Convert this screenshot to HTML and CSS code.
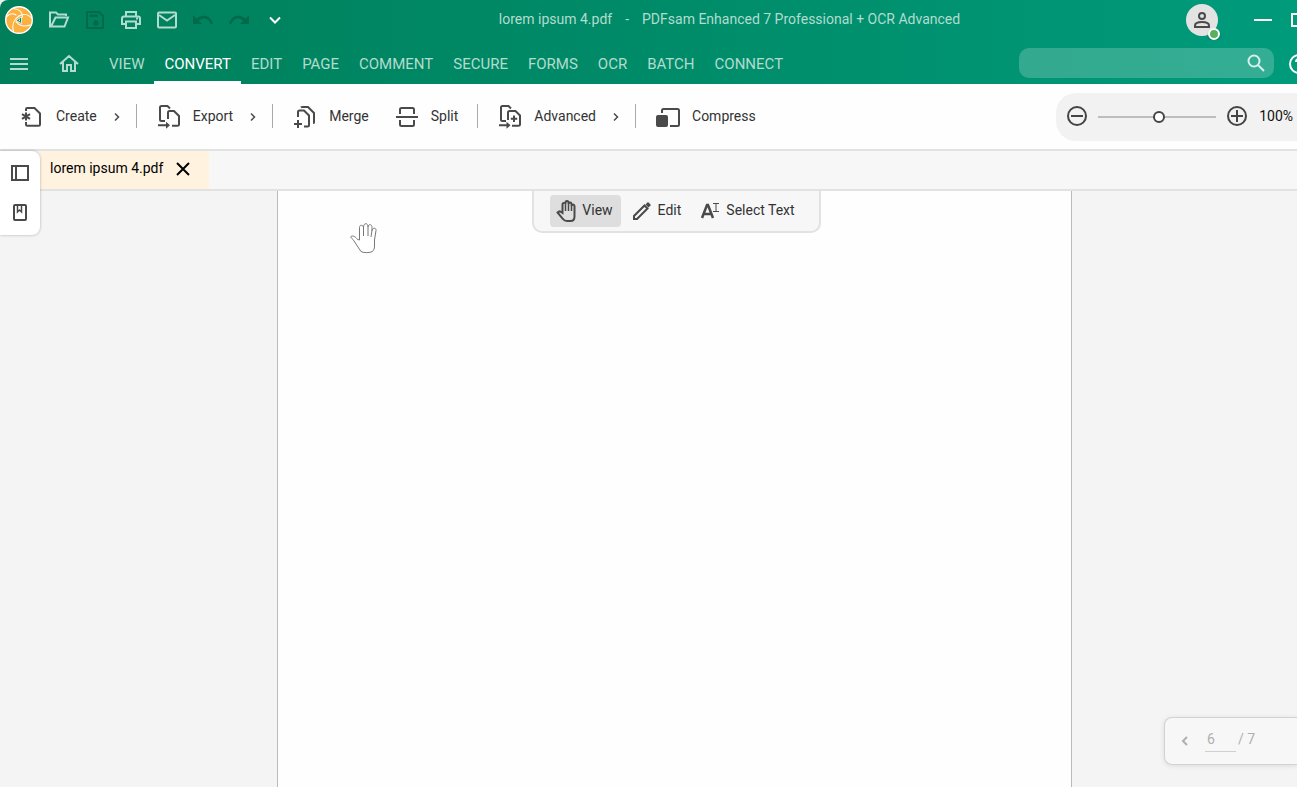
FILE: index.html
```html
<!DOCTYPE html>
<html lang="en">
<head>
<meta charset="utf-8">
<title>lorem ipsum 4.pdf - PDFsam Enhanced 7 Professional + OCR Advanced</title>
<link rel="stylesheet" href="styles.css">
</head>
<body>
<div class="app">
  <header class="header">
    <div class="titlebar">
      <svg class="logo" viewBox="0 0 28 28" aria-hidden="true">
        <circle cx="14" cy="14" r="13.3" fill="#fbb040" stroke="#fff" stroke-width="1.4"/>
        <g fill="none" stroke="#fff" stroke-width="1.1" stroke-linecap="round">
          <path d="M8 2.500C14 3 17.500 6 17.500 11"/>
          <path d="M26.500 12C23 8 18 7.500 14 10"/>
          <path d="M8.500 26C6.500 19 9 13 14 10"/>
          <path d="M11 15.500C14 20 20 21 25 19"/>
          <path d="M1.500 11C4 7.500 8 7 11 9"/>
        </g>
        <path d="M11 14.500L16.500 11V17.500Z" fill="#00845f" stroke="#fff" stroke-width=".8"/>
        <path d="M13.500 14.300L15 13.300V15.500Z" fill="#fff"/>
      </svg>
      <div class="quick">
        <button class="quick-btn" aria-label="Open"><svg width="22" height="22" viewBox="0 0 22 22" class="line"><path d="M18 7V5.500H10L8 3.500H2V17.500H16.500L20 8.500H7.500L3 17.500"/></svg></button>
        <button class="quick-btn off" aria-label="Save"><svg width="22" height="22" viewBox="0 0 22 22" class="line"><path d="M3 3H15L19 7V19H3Z" stroke-linejoin="round"/><path d="M5.500 5.500H14V8H5.500Z" fill="currentColor" stroke="none"/><circle cx="12" cy="14" r="2.700" fill="currentColor" stroke="none"/></svg></button>
        <button class="quick-btn" aria-label="Print"><svg width="22" height="22" viewBox="0 0 22 22" class="line"><path d="M6 7V3H16V7M6 15H2V9.500Q2 7.500 4 7.500H18Q20 7.500 20 9.500V15H16M6 12.500H16V19H6Z"/><path d="M16 9.500h2"/></svg></button>
        <button class="quick-btn" aria-label="Email"><svg width="22" height="22" viewBox="0 0 22 22" class="line"><rect x="2" y="3.500" width="18" height="15" rx="1"/><path d="M3 6L11 11.500 19 6"/></svg></button>
        <button class="quick-btn off" aria-label="Undo"><svg width="22" height="22" viewBox="0 0 22 22"><path fill="currentColor" d="M1 6V15H10L6.700 11.700C12 7.500 17 10 18.800 15.500L21 14.500C18.500 6.500 10.500 4.500 4.700 9.700Z"/></svg></button>
        <button class="quick-btn off" aria-label="Redo"><svg width="22" height="22" viewBox="0 0 22 22"><path fill="currentColor" d="M21 6V15H12L15.300 11.700C10 7.500 5 10 3.200 15.500L1 14.500C3.500 6.500 11.500 4.500 17.300 9.700Z"/></svg></button>
        <button class="quick-btn bright" aria-label="Customize toolbar"><svg width="22" height="22" viewBox="0 0 22 22" class="line"><path d="M6 8.500L11 13.500 16 8.500"/></svg></button>
      </div>
      <h1 class="title"><span>lorem ipsum 4.pdf</span><span>-</span><span>PDFsam Enhanced 7 Professional + OCR Advanced</span></h1>
      <div class="window">
        <button class="account" aria-label="Account">
          <svg width="18" height="18" viewBox="0 0 18 18" fill="none" stroke="#4a4a4a" stroke-width="2"><circle cx="9" cy="5" r="3"/><path d="M2 16V14.500C2 12 6 11 9 11S16 12 16 14.500V16Z"/></svg>
          <span class="status"></span>
        </button>
        <button class="win-btn" aria-label="Minimize"><svg width="18" height="14" viewBox="0 0 18 14"><path d="M0 7H18" stroke="#fff" stroke-width="2"/></svg></button>
        <button class="win-btn" aria-label="Maximize"><svg width="14" height="14" viewBox="0 0 14 14"><rect x="1" y="1" width="12" height="12" fill="none" stroke="#fff" stroke-width="2"/></svg></button>
      </div>
    </div>
    <div class="menubar">
      <button class="menu-icon" aria-label="Menu"><svg width="18" height="14" viewBox="0 0 18 14" class="line"><path d="M0 2H18M0 7H18M0 12H18"/></svg></button>
      <button class="menu-icon home" aria-label="Home"><svg width="22" height="20" viewBox="0 0 22 20" class="line"><path d="M2 11L11 3 20 11M5 9V18H9V12H13V18H17V9"/></svg></button>
      <nav class="tabs">
        <a href="#view">VIEW</a>
        <a href="#convert" class="active" aria-current="page">CONVERT</a>
        <a href="#edit">EDIT</a>
        <a href="#page">PAGE</a>
        <a href="#comment">COMMENT</a>
        <a href="#secure">SECURE</a>
        <a href="#forms">FORMS</a>
        <a href="#ocr">OCR</a>
        <a href="#batch">BATCH</a>
        <a href="#connect">CONNECT</a>
      </nav>
      <div class="search">
        <input type="search" aria-label="Search">
        <button aria-label="Find"><svg width="18" height="18" viewBox="0 0 18 18" fill="none" stroke="#d9efe9" stroke-width="2"><circle cx="7" cy="7" r="5.500"/><path d="M11 11L17 17"/></svg></button>
      </div>
      <button class="help" aria-label="Help"><svg width="20" height="20" viewBox="0 0 20 20" fill="none" stroke="#fff" stroke-width="2"><circle cx="10" cy="10" r="9"/><path d="M7 8Q7 5 10 5T13 8Q13 9.500 10 11V13M10 14.500V16.500"/></svg></button>
    </div>
  </header>

  <div class="toolbar">
    <button class="tool has-menu">
      <svg width="24" height="24" viewBox="0 0 24 24" class="line"><path d="M6 6V4.200Q6 3 7.200 3H14.500L20 8.500V19.500Q20 20.700 18.800 20.700H7.200Q6 20.700 6 19.500V17"/><path d="M6 7.500V15.500M2 9.200L10 13.800M2 13.800L10 9.200"/></svg>
      <span>Create</span>
      <svg class="line arrow" width="12" height="12" viewBox="0 0 12 12"><path d="M4 2.500L7.500 6 4 9.500"/></svg>
    </button>
    <span class="divider"></span>
    <button class="tool has-menu">
      <svg width="24" height="24" viewBox="0 0 24 24" class="line"><path d="M8 16H4.500Q3 16 3 14.500V2.500Q3 1 4.500 1H10.500L13 3.500M11 14V7.500Q11 6 12.500 6H17L22 11V19.500Q22 20.700 20.500 20.700H15M1 20.300H11"/><path d="M9 16.800L13 20.300 9 23.800Z" fill="currentColor" stroke="none"/></svg>
      <span>Export</span>
      <svg class="line arrow" width="12" height="12" viewBox="0 0 12 12"><path d="M4 2.500L7.500 6 4 9.500"/></svg>
    </button>
    <span class="divider"></span>
    <button class="tool">
      <svg width="24" height="24" viewBox="0 0 24 24" class="line"><path d="M8 2.500Q8.500 2 9.500 2H15L21 8V17.500Q21 18 20 18M5 12V7Q5 5.500 6.500 5.500H11L16 10.500V20Q16 21.500 14.500 21.500H11M5 15V23M1 19H9"/></svg>
      <span>Merge</span>
    </button>
    <button class="tool">
      <svg width="24" height="24" viewBox="0 0 24 24" class="line"><path d="M5 9V4.500Q5 3 6.500 3H17.500Q19 3 19 4.500V9M1 12H23M5 15V19.500Q5 21 6.500 21H17.500Q19 21 19 19.500V15"/></svg>
      <span>Split</span>
    </button>
    <span class="divider"></span>
    <button class="tool has-menu">
      <svg width="24" height="24" viewBox="0 0 24 24" class="line"><path d="M8 16H4.500Q3 16 3 14.500V2.500Q3 1 4.500 1H10.500L13 3.500M10 15V7.500Q10 6 11.500 6H17.500L22 10.500V19.500Q22 20.700 20.500 20.700H14M1 20.300H10M16 10.500V17M12.800 13.700H19.200"/><path d="M8.500 16.800L12.500 20.300 8.500 23.800Z" fill="currentColor" stroke="none"/></svg>
      <span>Advanced</span>
      <svg class="line arrow" width="12" height="12" viewBox="0 0 12 12"><path d="M4 2.500L7.500 6 4 9.500"/></svg>
    </button>
    <span class="divider"></span>
    <button class="tool">
      <svg width="24" height="24" viewBox="0 0 24 24" class="line"><path d="M6 8V5.500Q6 4 7.500 4H21.500Q23 4 23 5.500V19.500Q23 21 21.500 21H14"/><rect x="0" y="10" width="12" height="12" rx="2" fill="currentColor" stroke="none"/></svg>
      <span>Compress</span>
    </button>
    <div class="zoom">
      <button aria-label="Zoom out"><svg width="22" height="22" viewBox="0 0 22 22" class="line"><circle cx="11" cy="11" r="9"/><path d="M5 11H17"/></svg></button>
      <input type="range" min="0" max="100" value="52" aria-label="Zoom">
      <button aria-label="Zoom in"><svg width="22" height="22" viewBox="0 0 22 22" class="line"><circle cx="11" cy="11" r="9"/><path d="M5 11H17M11 5V17"/></svg></button>
      <output>100%</output>
    </div>
  </div>

  <div class="doc-tabs">
    <div class="doc-tab">
      <span>lorem ipsum 4.pdf</span>
      <button aria-label="Close tab"><svg width="14" height="14" viewBox="0 0 14 14"><path d="M1 1L13 13M13 1L1 13" stroke="#000" stroke-width="2"/></svg></button>
    </div>
    <aside class="side">
      <button aria-label="Thumbnails"><svg width="20" height="20" viewBox="0 0 20 20" class="line"><path d="M2 3H18V17H2ZM6 3V17"/></svg></button>
      <button aria-label="Bookmarks"><svg width="20" height="20" viewBox="0 0 20 20" class="line"><rect x="4" y="3" width="12" height="15" rx="1"/><path d="M7.500 3V10L9.500 8 11.500 10V3" stroke-width="1.500"/></svg></button>
    </aside>
  </div>

  <main class="workspace">
    <section class="page" aria-label="Page 6">
      <div class="modes">
        <button class="mode selected">
          <svg width="20" height="24" viewBox="0 0 20 24" class="line hand"><path d="M6.500 14V5.500Q6.500 4 8 4T9.500 4.500V3.500Q9.500 2 11 2T12.500 3.500V4.500Q13 3.500 14.200 3.500T15.500 5V6.500Q16 5.500 17 5.500T18.500 7V17.500Q18.500 22 14.500 22H11Q8.500 22 7 20L1.500 13.500Q3 11.500 5 13Z"/><path d="M9.500 4V12M12.500 4V12M15.500 6V12" stroke-width="1.500"/></svg>
          <span>View</span>
        </button>
        <button class="mode">
          <svg width="20" height="20" viewBox="0 0 20 20" class="line"><path d="M2 15L12.500 4.500 15.500 7.500 5 18H2Z"/><path d="M13.500 3.500L15.500 1.500Q16 1 16.500 1.500L18.500 3.500Q19 4 18.500 4.500L16.500 6.500Z" fill="currentColor" stroke="none"/></svg>
          <span>Edit</span>
        </button>
        <button class="mode">
          <svg width="20" height="20" viewBox="0 0 20 20" class="line"><path d="M2 17L7 4H8L13 17M4 13H11" stroke-width="2.500"/><path d="M13 2.500H19M16 2.500V10.500M13 10.500H19" stroke-width="1"/></svg>
          <span>Select Text</span>
        </button>
      </div>
      <svg class="hand-cursor" width="28" height="32" viewBox="0 0 28 32" fill="#fff" stroke="#777" aria-hidden="true"><path d="M9.500 18V5.500C9.500 2.500 13 2.500 13.500 5.500 13.500.500 18 .500 18 5 18.500 1.500 22 2 22 5.500V8.500C22.500 5.500 26.500 5.500 26 8.500L24.500 18V24C24.500 27 23.500 28 22.500 29.500 20 31 13 31 11 29.500L4 19C3 16.500 0 16 1 14.500 3 13 6 15 7.500 17.500ZM13.500 5V14M18 5V14M22 8L21 15"/></svg>
    </section>
    <form class="pager">
      <button type="button" aria-label="Previous page"><svg width="10" height="12" viewBox="0 0 10 12" class="line"><path d="M7 2L3 6 7 10"/></svg></button>
      <input type="text" value="6" aria-label="Page number">
      <span>/ 7</span>
    </form>
  </main>
</div>
</body>
</html>
```
FILE: styles.css
```css
* { box-sizing: border-box; }
body {
  margin: 0;
  background: #eee;
  font: 14px/20px Roboto, sans-serif;
  color: #333;
}
button, input {
  margin: 0;
  padding: 0;
  border: 0;
  background: none;
  font: inherit;
  color: inherit;
}
button {
  display: flex;
  align-items: center;
  justify-content: center;
}
svg { flex: none; display: block; }
.line { fill: none; stroke: currentColor; stroke-width: 2; }

.app {
  display: flex;
  flex-direction: column;
  height: 100vh;
  overflow: hidden;
}

/* Header */
.header {
  flex: none;
  background: linear-gradient(90deg, #007f5a, #008b68 50%, #009b7b);
  border-top-left-radius: 8px;
  color: #b2dccf;
}
.titlebar {
  display: flex;
  align-items: center;
  height: 40px;
  padding-left: 5px;
}
.logo { width: 28px; height: 28px; }
.quick { display: flex; margin-left: 8px; }
.quick-btn { width: 36px; height: 40px; }
.quick-btn.off { color: #006a4b; }
.quick-btn.bright { color: #fff; }
.title {
  flex: 1;
  display: flex;
  justify-content: center;
  gap: 13px;
  margin: 0;
  padding: 0 20px 2px 0;
  font-size: 14px;
  font-weight: 400;
  white-space: nowrap;
}
.window {
  display: flex;
  width: 111px;
  overflow: hidden;
}
.account {
  position: relative;
  flex: none;
  width: 32px;
  height: 32px;
  margin: 4px 36px 4px 0;
  border-radius: 50%;
  background: #e3e3e3;
}
.status {
  position: absolute;
  right: -2px;
  bottom: -4px;
  width: 12px;
  height: 12px;
  border: 2px solid #fff;
  border-radius: 50%;
  background: #5cb05c;
  box-shadow: 0 1px 2px rgba(0, 0, 0, .3);
}
.win-btn { flex: none; margin-right: 19px; }

.menubar {
  display: flex;
  align-items: center;
  height: 44px;
  overflow: hidden;
}
.menu-icon { width: 38px; height: 44px; padding-top: 4px; }
.home { margin-left: 12px; padding-top: 2px; }
.tabs {
  display: flex;
  margin-left: 11px;
  margin-right: auto;
  align-self: stretch;
}
.tabs a {
  padding: 14px 10px 7px;
  border-bottom: 3px solid transparent;
  color: inherit;
  font-size: 15px;
  text-decoration: none;
}
.tabs .active { border-color: #fff; color: #fff; }
.search {
  display: flex;
  align-items: center;
  width: 255px;
  height: 30px;
  margin-top: 2px;
  padding: 0 9px;
  border-radius: 10px;
  background: rgba(255, 255, 255, .2);
}
.search input { flex: 1; min-width: 0; outline: 0; appearance: none; }
.help {
  flex: none;
  width: 20px;
  margin: 4px -12px 0 15px;
}

/* Toolbar */
.toolbar {
  flex: none;
  display: flex;
  align-items: center;
  height: 67px;
  padding-top: 1px;
  border-bottom: 2px solid #e2e2e2;
  background: #fefefe;
}
.tool {
  gap: 12px;
  height: 48px;
  padding: 0 6px 0 20px;
}
.tool span { padding-bottom: 2px; }
.tool svg { color: #4a4a4a; }
.has-menu { padding-right: 0; }
.has-menu .arrow { margin-left: 2px; stroke-width: 1.5; }
.divider {
  width: 1px;
  height: 24px;
  margin: 0 0 2px 13px;
  background: #aaa;
}
.zoom {
  display: flex;
  align-items: center;
  gap: 10px;
  height: 48px;
  margin-left: auto;
  padding: 0 4px 2px 10px;
  border-radius: 20px 0 0 20px;
  background: #f2f2f2;
  color: #111;
}
.zoom button { color: #444; }
.zoom output { min-width: 35px; text-align: right; }
.zoom input {
  width: 118px;
  height: 16px;
  margin-top: 2px;
  appearance: none;
}
.zoom input::-webkit-slider-runnable-track {
  height: 2px;
  background: #bdbdbd;
}
.zoom input::-webkit-slider-thumb {
  width: 12px;
  height: 12px;
  margin-top: -5px;
  border: 2px solid #444;
  border-radius: 50%;
  background: #fff;
  appearance: none;
}

/* Document tabs */
.doc-tabs {
  position: relative;
  flex: none;
  display: flex;
  height: 40px;
  padding-left: 40px;
  border-bottom: 2px solid #e2e2e2;
  background: #f7f7f7;
}
.doc-tab {
  display: flex;
  align-items: center;
  gap: 13px;
  padding: 0 19px 2px 10px;
  background: #fff2df;
  color: #000;
}
.doc-tab span { padding-bottom: 2px; }
.side {
  position: absolute;
  z-index: 2;
  top: 0;
  left: 0;
  display: flex;
  flex-direction: column;
  gap: 19px;
  width: 40px;
  padding: 12px 10px 13px;
  border-radius: 0 8px 8px 0;
  background: #fff;
  box-shadow: 0 0 3px rgba(0, 0, 0, .3);
  color: #4a4a4a;
}

/* Workspace */
.workspace {
  position: relative;
  flex: 1;
  min-height: 0;
  padding: 0 225px 0 277px;
  background: #f4f4f4;
}
.page {
  position: relative;
  display: flex;
  align-items: flex-start;
  justify-content: center;
  height: 100%;
  padding-left: 4px;
  border: solid #bbb;
  border-width: 0 1px;
  background: #fefefe;
}
.modes {
  display: flex;
  gap: 5px;
  padding: 4px 16px;
  border: solid #e2e2e2;
  border-width: 0 2px 2px;
  border-radius: 0 0 10px 10px;
  background: #f7f7f7;
}
.mode {
  gap: 6px;
  height: 32px;
  padding: 0 8px 0 6px;
  border-radius: 4px;
}
.mode span { padding-bottom: 2px; }
.mode svg { color: #4a4a4a; }
.selected { background: #dedede; }
.hand-cursor {
  position: absolute;
  top: 31px;
  left: 72px;
}
.pager {
  position: absolute;
  right: 0;
  bottom: 22px;
  display: flex;
  align-items: center;
  width: 133px;
  height: 48px;
  padding-left: 15px;
  border: 1px solid #d2d2d2;
  border-right: 0;
  border-radius: 8px 0 0 8px;
  background: #f7f7f7;
  box-shadow: 0 1px 5px rgba(0, 0, 0, .1);
  color: #b0b0b0;
}
.pager input {
  width: 31px;
  height: 24px;
  margin: 0 2px 2px 15px;
  padding: 0 2px 2px;
  border-bottom: 1px solid #d0d0d0;
}
.pager span { padding-bottom: 4px; }
```
